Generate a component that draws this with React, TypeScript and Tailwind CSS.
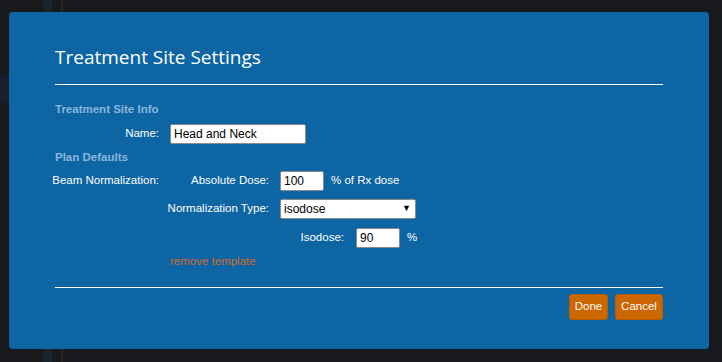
import React from "react";

const arial = "font-['Liberation_Sans',Arial,sans-serif]";

const Field = ({ value, width }: { value: string; width: string }) => (
  <input
    readOnly
    value={value}
    className={`${width} h-[20px] bg-white border border-[#8a8a8a] rounded-[2px] px-[3px] text-[12px] text-black outline-none ${arial}`}
  />
);

const App = () => {
  return (
    <div className="relative w-[722px] h-[362px] overflow-hidden bg-[#18191d]">
      {/* page behind the backdrop */}
      <div className="absolute inset-0 flex">
        <div className="w-[43px]" />
        <div className="w-[6px] bg-[#19222c]" />
        <div className="w-[3px] bg-[#1a2733]" />
        <div className="w-[9px]" />
        <div className="w-[2px] bg-[#26272c]" />
      </div>
      <div className="absolute left-0 top-[76px] w-[20px] h-[27px] bg-[#16212d]" />

      <div className="relative ml-[9px] mt-[12px] w-[700px] h-[337px] rounded-[4px] bg-[#0d65a4] px-[46px]">
        <div className="pt-[31px]">
          <h3 className="h-[28px] leading-[28px] text-[19px] text-white font-['Open_Sans',sans-serif]">
            Treatment Site Settings
          </h3>
        </div>
        <div className="mt-[13px] border-t border-white" />

        <div className={`${arial} text-[11.5px] text-white`}>
          <div className="mt-[16px] h-[16px] leading-[16px] font-bold text-[#88b7de]">
            Treatment Site Info
          </div>
          <div className="mt-[7px] flex items-center h-[20px]">
            <div className="w-[115px] flex justify-end pr-[11px] whitespace-nowrap">Name:</div>
            <Field value="Head and Neck" width="w-[136px]" />
          </div>

          <div className="mt-[5px] h-[16px] leading-[16px] font-bold text-[#88b7de]">
            Plan Defaults
          </div>
          <div className="mt-[6px] flex items-center h-[20px]">
            <div className="w-[115px] flex justify-end pr-[11px] whitespace-nowrap">Beam Normalization:</div>
            <div className="w-[110px] flex justify-end pr-[11px] whitespace-nowrap">Absolute Dose:</div>
            <Field value="100" width="w-[44px]" />
            <span className="ml-[7px] whitespace-nowrap">% of Rx dose</span>
          </div>
          <div className="mt-[8px] flex items-center h-[20px]">
            <div className="w-[115px]" />
            <div className="w-[110px] flex justify-end pr-[11px] whitespace-nowrap">Normalization Type:</div>
            <div className="w-[136px] h-[20px] flex items-center justify-between bg-white border border-[#8a8a8a] rounded-[2px] pl-[3px] pr-[4px] text-[12px] text-black">
              <span>isodose</span>
              <span className="text-[9px]">▼</span>
            </div>
          </div>
          <div className="mt-[9px] flex items-center h-[20px]">
            <div className="w-[115px]" />
            <div className="w-[186px] flex justify-end pr-[12px] whitespace-nowrap">Isodose:</div>
            <Field value="90" width="w-[44px]" />
            <span className="ml-[7px]">%</span>
          </div>
          <div className="mt-[5px] h-[16px] leading-[16px] pl-[115px] text-[#cf6a2c]">
            remove template
          </div>
        </div>

        <div className="mt-[18px] border-t border-white" />

        <div className={`mt-[6px] flex justify-end gap-[7px] ${arial} text-[11.5px] text-white`}>
          <button className="h-[26px] w-[39px] rounded-[3px] bg-[#cc6600] border border-[#b85c00]">Done</button>
          <button className="h-[26px] w-[48px] rounded-[3px] bg-[#cc6600] border border-[#b85c00]">Cancel</button>
        </div>
      </div>
    </div>
  );
};

export default App;
